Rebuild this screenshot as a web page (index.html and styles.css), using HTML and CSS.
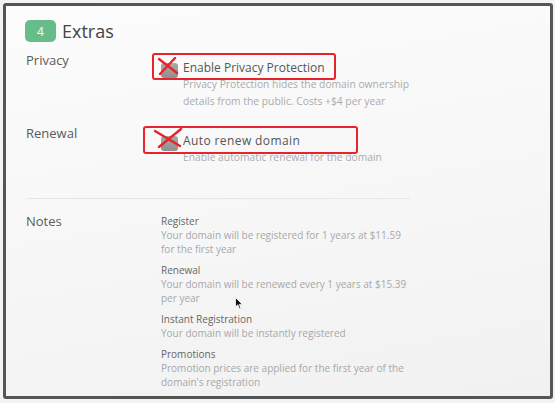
FILE: index.html
```html
<!DOCTYPE html>
<html>
<head>
<meta charset="utf-8">
<link rel="stylesheet" href="styles.css">
</head>
<body>
<div class="frame">
  <div class="panel">
    <h2 class="title"><span class="badge">4</span>Extras</h2>

    <div class="row row-privacy">
      <div class="label">Privacy</div>
      <div class="field">
        <div class="check"><span class="box"></span>Enable Privacy Protection</div>
        <p class="help">Privacy Protection hides the domain ownership<br>details from the public. Costs +$4 per year</p>
      </div>
    </div>

    <div class="row row-renewal">
      <div class="label">Renewal</div>
      <div class="field">
        <div class="check check-wide"><span class="box"></span>Auto renew domain</div>
        <p class="help">Enable automatic renewal for the domain</p>
      </div>
    </div>

    <div class="divider"></div>

    <div class="row row-notes">
      <div class="label">Notes</div>
      <div class="notes">
        <div class="note">
          <div class="note-title">Register</div>
          <div class="note-text">Your domain will be registered for 1 years at $11.59<br>for the first year</div>
        </div>
        <div class="note">
          <div class="note-title">Renewal</div>
          <div class="note-text">Your domain will be renewed every 1 years at $15.39<br>per year</div>
        </div>
        <div class="note">
          <div class="note-title">Instant Registration</div>
          <div class="note-text">Your domain will be instantly registered</div>
        </div>
        <div class="note">
          <div class="note-title">Promotions</div>
          <div class="note-text">Promotion prices are applied for the first year of the<br>domain's registration</div>
        </div>
      </div>
    </div>
  </div>

  <div class="mark mark-1"></div>
  <div class="mark mark-2"></div>
  <svg class="cross cross-1" viewBox="0 0 22 18" width="22" height="18"><path d="M2 2 L20 16 M18 1 L3 17" stroke="#e8232b" stroke-width="2.4" stroke-linecap="round" fill="none"/></svg>
  <svg class="cross cross-2" viewBox="0 0 30 20" width="30" height="20"><path d="M2 3 L27 18 M28 1 L6 19" stroke="#e8232b" stroke-width="2.4" stroke-linecap="round" fill="none"/></svg>
  <svg class="cursor" viewBox="0 0 8 13" width="8" height="13"><path d="M0.5 0.5 L0.5 10 L2.8 7.8 L4.5 11.8 L5.9 11.2 L4.3 7.4 L7.3 7.4 Z" fill="#111" stroke="#fff" stroke-width="0.8"/></svg>
</div>
</body>
</html>
```
FILE: styles.css
```css
* { box-sizing: border-box; }
html, body { margin: 0; padding: 0; }
body {
  background: #f3f3f3;
  font-family: "Open Sans", "Noto Sans", sans-serif;
  width: 555px;
  height: 403px;
  overflow: hidden;
}
.frame {
  position: relative;
  margin: 3px 0 0 3px;
  width: 550px;
  height: 396px;
  border: 3px solid #555;
  border-radius: 3px;
  background: linear-gradient(170deg, #fcfcfc 0%, #f7f7f7 50%, #f1f1f1 100%);
  overflow: hidden;
}
.panel {
  padding: 13px 0 0 20px;
}
.title {
  display: flex;
  align-items: center;
  gap: 6px;
  margin: 0;
  height: 24px;
  font-size: 18px;
  font-weight: 400;
  color: #444;
}
.badge {
  display: inline-flex;
  align-items: center;
  justify-content: center;
  width: 31px;
  height: 22px;
  margin-left: -1px;
  border-radius: 5px;
  background: #67bd89;
  color: #fff;
  font-size: 12px;
}
.row {
  display: flex;
}
.row-privacy { margin-top: 6px; }
.row-renewal { margin-top: 12px; }
.label {
  width: 135px;
  flex: none;
  padding-top: 3px;
  font-size: 13px;
  line-height: 17px;
  color: #5a5a5a;
}
.field {
  padding-top: 10px;
}
.check {
  display: flex;
  align-items: center;
  gap: 5px;
  height: 17px;
  font-size: 12px;
  color: #555;
}
.check-wide { letter-spacing: 0.4px; }
.box {
  width: 17px;
  height: 15px;
  margin-top: 6px;
  border-radius: 3px;
  background: linear-gradient(#a9a9a9, #8f8f8f);
}
.help {
  margin: 0 0 0 22px;
  font-size: 10.3px;
  line-height: 17px;
  color: #ababab;
}
.divider {
  margin: 32px 0 14px 1px;
  width: 383px;
  height: 1px;
  background: #e6e6e6;
}
.row-notes .label { padding-top: 0; }
.notes {
  display: flex;
  flex-direction: column;
  gap: 7px;
  padding-top: 1px;
}
.note-title {
  font-size: 10px;
  line-height: 14px;
  color: #666;
}
.note-text {
  font-size: 10px;
  line-height: 14px;
  color: #a8a8a8;
}
.mark {
  position: absolute;
  border: 2px solid #e8232b;
  border-radius: 3px;
}
.mark-1 { left: 146px; top: 47px; width: 184px; height: 27px; }
.mark-2 { left: 137px; top: 120px; width: 215px; height: 28px; }
.cross { position: absolute; }
.cross-1 { left: 151px; top: 51px; }
.cross-2 { left: 147px; top: 122px; }
.cursor { position: absolute; left: 229px; top: 291px; }
```
